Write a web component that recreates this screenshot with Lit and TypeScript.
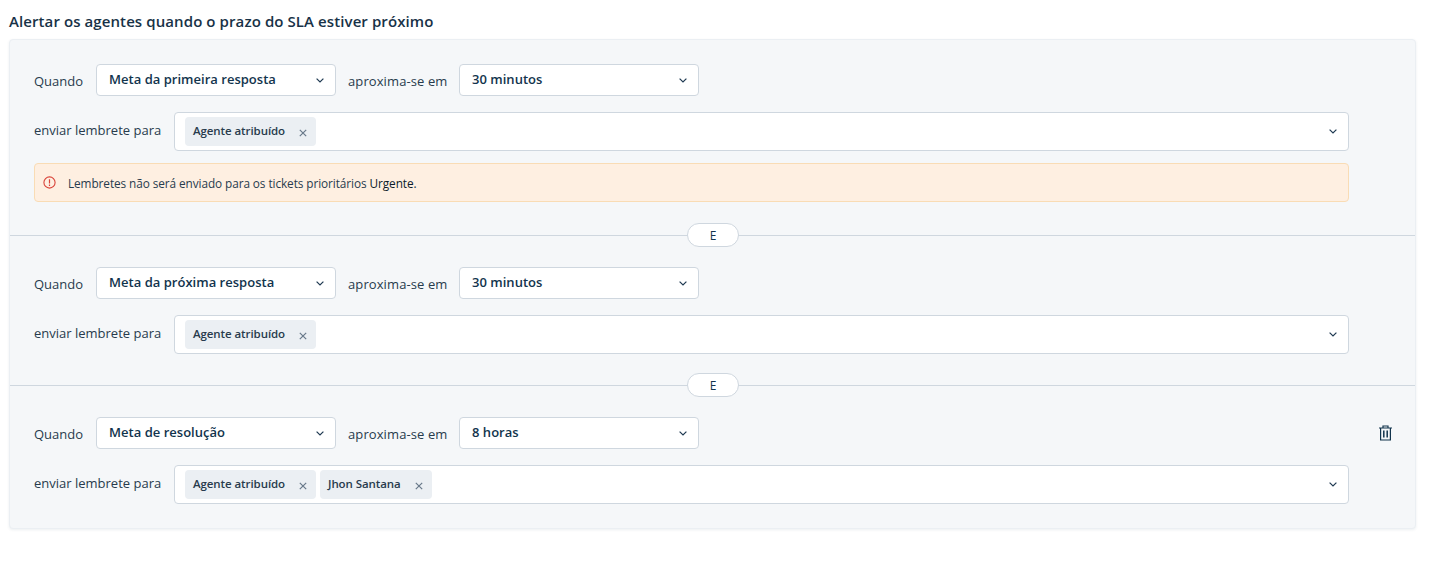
import { LitElement, html, css, nothing } from "lit";
import { customElement } from "lit/decorators.js";

const chevron = html`<svg class="chev" width="8" height="5" viewBox="0 0 8 5" fill="none"><path d="M.6.6 4 4 7.4.6" stroke="#1f3a52" stroke-width="1.2"/></svg>`;

interface Rule { metric: string; time: string; agents: string[]; warn?: boolean; trash?: boolean; cls: string; }

const rules: Rule[] = [
  { metric: "Meta da primeira resposta", time: "30 minutos", agents: ["Agente atribuído"], warn: true, cls: "first" },
  { metric: "Meta da próxima resposta", time: "30 minutos", agents: ["Agente atribuído"], cls: "second" },
  { metric: "Meta de resolução", time: "8 horas", agents: ["Agente atribuído", "Jhon Santana"], trash: true, cls: "third" },
];

@customElement("app-root")
export class AppRoot extends LitElement {
  static styles = css`
    :host { display: block; font-family: "Open Sans", "Noto Sans", sans-serif; color: #12344d; background: #fff; height: 563px; overflow: hidden; }
    .wrap { padding: 11px 24px 0 9px; }
    .title { font-size: 15px; font-weight: 600; line-height: 20px; height: 28px; letter-spacing: 0.09px; color: #183247; }
    .card { width: 1407px; box-sizing: border-box; background: #f5f7f9; border: 1px solid #ebeff3; border-radius: 4px; box-shadow: 0 1px 3px rgba(18,52,77,.08); }
    .sec { padding: 24px 24px 0; display: flex; flex-direction: column; gap: 16px; position: relative; }
    .sec.first { padding-bottom: 33px; }
    .sec.second { padding-top: 31px; padding-bottom: 31px; }
    .sec.third { padding-top: 31px; padding-bottom: 24px; }
    .sep { height: 1px; background: #cfd7df; position: relative; }
    .pill { position: absolute; left: 677px; top: -12px; width: 52px; height: 24px; box-sizing: border-box; border: 1px solid #cfd7df; border-radius: 12px; background: #fff; font-size: 12px; font-weight: 500; display: flex; align-items: center; justify-content: center; color: #12344d; }
    .row { display: flex; align-items: center; }
    .lbl { font-size: 13px; line-height: 18px; color: #283b4d; letter-spacing: 0; }
    .when { width: 62px; position: relative; top: 1px; }
    .approx { width: 111px; margin-left: 12px; position: relative; top: 1px; letter-spacing: 0.1px; }
    .send { width: 140px; position: relative; top: -2px; }
    .select { width: 240px; height: 32px; box-sizing: border-box; background: #fff; border: 1px solid #cfd7df; border-radius: 4px; padding: 0 11px 0 12px; display: flex; align-items: center; justify-content: space-between; font-size: 13px; font-weight: 600; color: #12344d; letter-spacing: 0.02px; }
    .select span { display: block; margin-bottom: 2px; }
    .multi { width: 1175px; height: 39px; box-sizing: border-box; background: #fff; border: 1px solid #cfd7df; border-radius: 4px; padding: 0 11px 0 10px; display: flex; align-items: center; justify-content: space-between; }
    .tags { display: flex; gap: 4px; }
    .tag { height: 29px; box-sizing: border-box; background: #ebeff3; border-radius: 4px; padding: 0 9px 0 8px; display: flex; align-items: center; font-size: 11.5px; font-weight: 600; color: #283b4d; letter-spacing: -0.08px; }
    .tag span { display: block; margin-bottom: 2px; }
    .x { margin-left: 14px; margin-top: 2px; display: block; }
    .warn { height: 39px; width: 1315px; margin-top: -4px; box-sizing: border-box; background: #feefe1; border: 1px solid #f9dcb5; border-radius: 4px; padding: 0 8px; display: flex; align-items: center; gap: 12px; font-size: 11.8px; color: #283b4d; letter-spacing: -0.08px; }
    .warn b { font-weight: 400; color: #0b1c2a; }
    .trash { position: absolute; left: 1369px; top: 39px; }
  `;

  private xIcon() {
    return html`<svg class="x" width="8" height="8" viewBox="0 0 8 8" fill="none"><path d="M.8.8l6.4 6.4M7.2.8.8 7.2" stroke="#68798a" stroke-width="1.2"/></svg>`;
  }

  private renderRule(r: Rule) {
    return html`<div class="sec ${r.cls}">
      <div class="row">
        <span class="lbl when">Quando</span>
        <div class="select"><span>${r.metric}</span>${chevron}</div>
        <span class="lbl approx">aproxima-se em</span>
        <div class="select"><span>${r.time}</span>${chevron}</div>
      </div>
      <div class="row">
        <span class="lbl send">enviar lembrete para</span>
        <div class="multi">
          <div class="tags">${r.agents.map((a) => html`<div class="tag"><span>${a}</span>${this.xIcon()}</div>`)}</div>
          ${chevron}
        </div>
      </div>
      ${r.warn
        ? html`<div class="warn">
            <svg width="13" height="13" viewBox="0 0 13 13" fill="none"><circle cx="6.5" cy="6.5" r="5.6" stroke="#d9443a" stroke-width="1.1"/><path d="M6.5 3.2v4.2M6.5 8.6v1.3" stroke="#d9443a" stroke-width="1.2"/></svg>
            <span>Lembretes não será enviado para os tickets prioritários <b>Urgente</b>.</span>
          </div>`
        : nothing}
      ${r.trash
        ? html`<svg class="trash" width="13" height="16" viewBox="0 0 13 16" fill="none" stroke="#12344d" stroke-width="1.2"><path d="M0 3h13M4 3V1h5v2M1.6 3v12h9.8V3"/><path d="M4.8 5.5v7M8.2 5.5v7" stroke-width="1.5"/></svg>`
        : nothing}
    </div>`;
  }

  render() {
    return html`<div class="wrap">
      <div class="title">Alertar os agentes quando o prazo do SLA estiver próximo</div>
      <div class="card">
        ${this.renderRule(rules[0])}
        <div class="sep"><span class="pill">E</span></div>
        ${this.renderRule(rules[1])}
        <div class="sep"><span class="pill">E</span></div>
        ${this.renderRule(rules[2])}
      </div>
    </div>`;
  }
}
